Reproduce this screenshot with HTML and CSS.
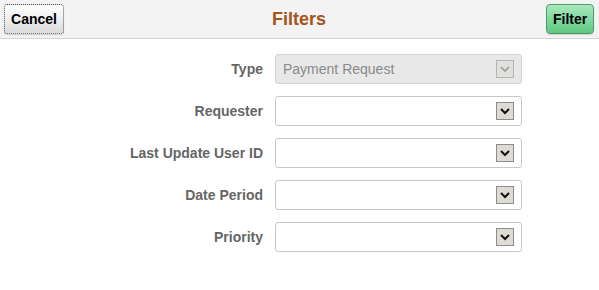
FILE: index.html
```html
<!DOCTYPE html>
<html lang="en">
<head>
    <meta charset="UTF-8">
    <title>Filters</title>
    <link rel="stylesheet" href="styles.css">
</head>
<body>
    <div class="header">
        <button class="btn btn-cancel">Cancel</button>
        <h1 class="title">Filters</h1>
        <button class="btn btn-filter">Filter</button>
    </div>

    <div class="filter-form">
        <label class="field-label">Type</label>
        <div class="select disabled">
            <span class="select-value">Payment Request</span>
            <span class="select-arrow">
                <svg width="12" height="12" viewBox="0 0 12 12"><polyline points="2,4 6,8 10,4" fill="none" stroke="#999" stroke-width="1.6"/></svg>
            </span>
        </div>

        <label class="field-label">Requester</label>
        <div class="select">
            <span class="select-value"></span>
            <span class="select-arrow">
                <svg width="12" height="12" viewBox="0 0 12 12"><polyline points="2,4 6,8 10,4" fill="none" stroke="#111" stroke-width="2"/></svg>
            </span>
        </div>

        <label class="field-label">Last Update User ID</label>
        <div class="select">
            <span class="select-value"></span>
            <span class="select-arrow">
                <svg width="12" height="12" viewBox="0 0 12 12"><polyline points="2,4 6,8 10,4" fill="none" stroke="#111" stroke-width="2"/></svg>
            </span>
        </div>

        <label class="field-label">Date Period</label>
        <div class="select">
            <span class="select-value"></span>
            <span class="select-arrow">
                <svg width="12" height="12" viewBox="0 0 12 12"><polyline points="2,4 6,8 10,4" fill="none" stroke="#111" stroke-width="2"/></svg>
            </span>
        </div>

        <label class="field-label">Priority</label>
        <div class="select">
            <span class="select-value"></span>
            <span class="select-arrow">
                <svg width="12" height="12" viewBox="0 0 12 12"><polyline points="2,4 6,8 10,4" fill="none" stroke="#111" stroke-width="2"/></svg>
            </span>
        </div>
    </div>
</body>
</html>
```

FILE: styles.css
```css
body {
    margin: 0;
    font-family: "Liberation Sans", Arial, sans-serif;
    background-color: #fff;
}
.header {
    display: grid;
    grid-template-columns: 1fr auto 1fr;
    align-items: center;
    height: 38px;
    padding: 0 5px 0 4px;
    background-color: #f3f3f3;
    border-bottom: 1px solid #d4d4d4;
}
.title {
    margin: 0;
    font-size: 18px;
    font-weight: bold;
    color: #a5531c;
}
.btn {
    height: 30px;
    padding: 0 6px;
    font-family: "Liberation Sans", Arial, sans-serif;
    font-size: 14px;
    font-weight: bold;
    color: #000;
    cursor: pointer;
}
.btn-cancel {
    width: 60px;
    border: 1px dotted #555;
    border-radius: 3px;
    background: linear-gradient(#ffffff, #dcdcdc);
    box-shadow: 0 1px 1px rgba(0,0,0,0.15);
}
.btn-filter {
    justify-self: end;
    width: 48px;
    border: 1px solid #4e9d66;
    border-radius: 4px;
    background: linear-gradient(#a9e9bd, #5ec880);
    box-shadow: 0 1px 1px rgba(0,0,0,0.15);
}
.filter-form {
    display: grid;
    grid-template-columns: 263px 247px;
    column-gap: 12px;
    row-gap: 12px;
    padding-top: 15px;
}
.field-label {
    align-self: center;
    text-align: right;
    font-size: 14px;
    font-weight: bold;
    color: #666;
}
.select {
    display: flex;
    align-items: center;
    justify-content: space-between;
    box-sizing: border-box;
    height: 30px;
    padding: 0 7px 0 7px;
    border: 1px solid #c8c8c8;
    border-radius: 3px;
    background-color: #fff;
}
.select.disabled {
    background-color: #e8e8e8;
    border-color: #d2d2d2;
}
.select-value {
    font-size: 14px;
    color: #8a8a8a;
}
.select-arrow {
    display: flex;
    align-items: center;
    justify-content: center;
    box-sizing: border-box;
    width: 18px;
    height: 18px;
    border: 1px solid #8c8c8c;
    background-color: #dedad4;
}
.select.disabled .select-arrow {
    border-color: #b4b4b4;
    background-color: #e2e0dc;
}
```
